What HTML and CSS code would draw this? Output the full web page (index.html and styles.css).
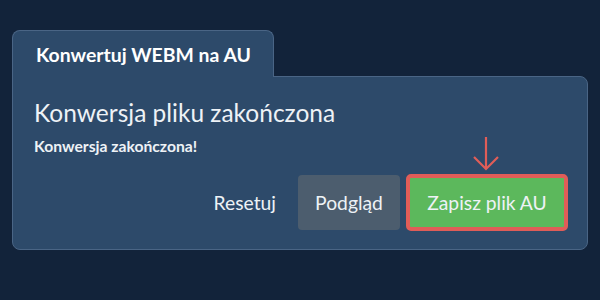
FILE: index.html
```html
<!DOCTYPE html>
<html lang="pl">
<head>
<meta charset="utf-8">
<link rel="stylesheet" href="styles.css">
</head>
<body>
<div class="panel">
  <div class="tab">Konwertuj WEBM na AU</div>
  <div class="card">
    <h1 class="title">Konwersja pliku zakończona</h1>
    <p class="status">Konwersja zakończona!</p>
    <div class="actions">
      <button class="btn btn-link">Resetuj</button>
      <button class="btn btn-gray">Podgląd</button>
      <div class="save-wrap">
        <svg class="arrow" width="30" height="36" viewBox="0 0 30 36">
          <path d="M15 1 V33 M3 21 L15 33 L27 21" fill="none" stroke="#e05d58" stroke-width="2.2"/>
        </svg>
        <button class="btn btn-green">Zapisz plik AU</button>
      </div>
    </div>
  </div>
</div>
</body>
</html>
```
FILE: styles.css
```css
html, body {
  margin: 0;
  padding: 0;
  background: #12233a;
  font-family: Lato, "Open Sans", sans-serif;
  color: #eef2f6;
}
.panel {
  width: 576px;
  padding: 30px 0 0 12px;
  display: flex;
  flex-direction: column;
}
.tab {
  align-self: flex-start;
  width: 262px;
  height: 47px;
  box-sizing: border-box;
  background: #2d4a6a;
  border: 1px solid #4a6585;
  border-bottom: none;
  border-radius: 8px 8px 0 0;
  padding: 12px 0 0 23px;
  font-size: 19.4px;
  font-weight: 700;
  color: #ffffff;
  position: relative;
  z-index: 1;
  margin-bottom: -1px;
}
.card {
  background: #2d4a6a;
  border: 1px solid #4a6585;
  border-radius: 0 8px 8px 8px;
  padding: 21px 19px 18px 21px;
}
.title {
  margin: 0;
  font-size: 24.5px;
  font-weight: 400;
  line-height: 30px;
  color: #eef2f6;
}
.status {
  margin: 8px 0 0;
  font-size: 15.7px;
  font-weight: 700;
  line-height: 20px;
}
.actions {
  display: flex;
  justify-content: flex-end;
  align-items: center;
  gap: 6px;
  margin-top: 18px;
}
.btn {
  font-family: Lato, "Open Sans", sans-serif;
  font-size: 19.3px;
  color: #eef2f6;
  border: none;
  border-radius: 4px;
  height: 55px;
  cursor: pointer;
}
.btn-link {
  background: none;
  padding: 0 16px 0 0;
}
.btn-gray {
  background: #4c5d6e;
  width: 102px;
  padding: 0;
}
.save-wrap {
  position: relative;
}
.arrow {
  position: absolute;
  left: 65px;
  top: -38px;
  display: block;
}
.btn-green {
  display: block;
  background: #5cb85c;
  border: 4px solid #e05d58;
  width: 162px;
  height: 57px;
  padding: 0;
  border-radius: 5px;
}
```
